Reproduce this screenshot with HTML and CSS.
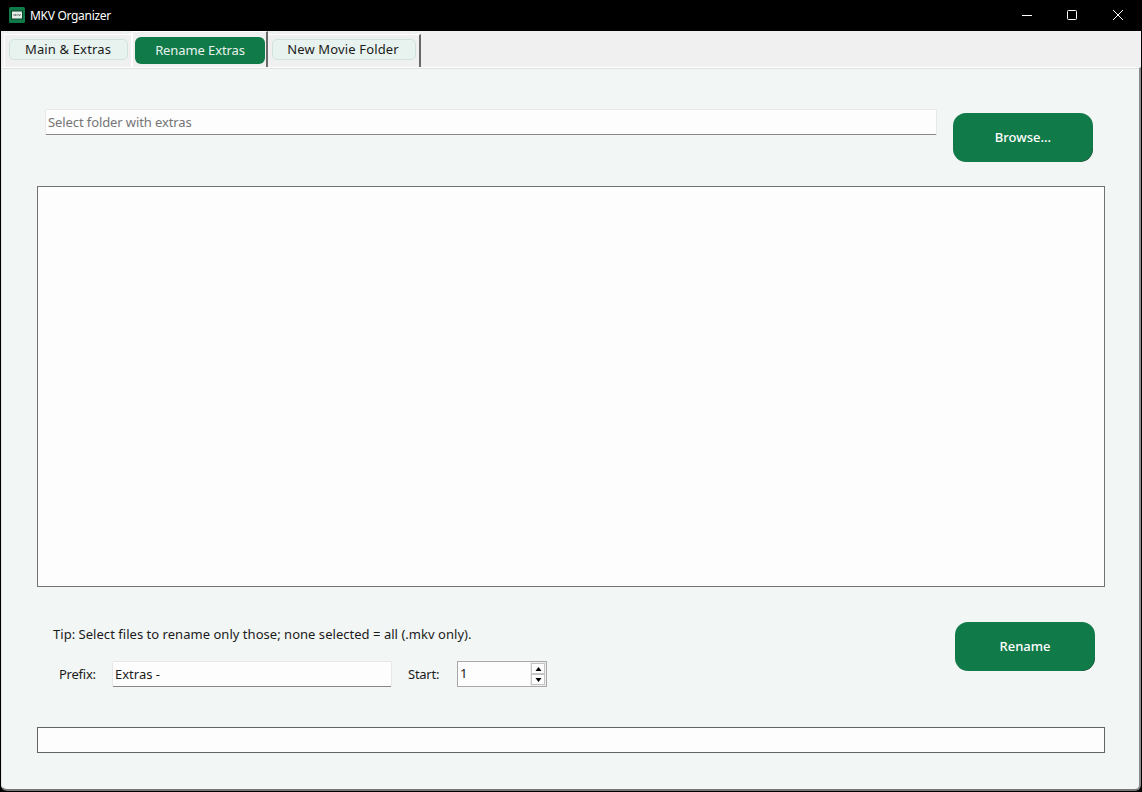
FILE: index.html
```html
<!DOCTYPE html>
<html lang="en">
<head>
<meta charset="utf-8">
<title>MKV Organizer</title>
<link rel="stylesheet" href="styles.css">
</head>
<body>
<div class="window">
  <header class="titlebar">
    <svg class="app-icon" width="16" height="16" viewBox="0 0 16 16">
      <rect width="16" height="16" rx="1.5" fill="#117a49"/>
      <rect x="2.5" y="4" width="11" height="8" fill="#e4ece8" stroke="#0a3f28"/>
      <path d="M5 7v2M6.5 7v2M8 7v2M9.5 7l1 2 1-2" fill="none" stroke="#58635e" stroke-width=".8"/>
    </svg>
    <span class="app-title">MKV Organizer</span>
    <svg class="controls" width="104" height="12" viewBox="0 0 104 12" fill="none" stroke="#fff">
      <path d="M0 6.5h10"/>
      <rect x="45.5" y="1.5" width="9" height="9" rx="1"/>
      <path d="M91 1l10 10M101 1l-10 10"/>
    </svg>
  </header>
  <nav class="tabs">
    <div class="tab first"><span class="pill t-main">Main &amp; Extras</span></div>
    <div class="tab active"><span class="pill t-rename">Rename Extras</span></div>
    <div class="tab last"><span class="pill t-new">New Movie Folder</span></div>
  </nav>
  <main class="pane">
    <section class="folder-row">
      <div class="field folder">Select folder with extras</div>
      <div class="button browse">Browse...</div>
    </section>
    <section class="list"></section>
    <section class="rename-row">
      <div class="options">
        <p class="tip">Tip: Select files to rename only those; none selected = all (.mkv only).</p>
        <div class="inputs">
          <span class="label prefix-label">Prefix:</span>
          <div class="field prefix">Extras -</div>
          <span class="label start-label">Start:</span>
          <div class="spin">
            <span class="value">1</span>
            <div class="steps">
              <span class="step"><svg width="7" height="4" viewBox="0 0 7 4"><path d="M3.5 0L6.5 4h-6z"/></svg></span>
              <span class="step"><svg width="7" height="4" viewBox="0 0 7 4"><path d="M3.5 4L.5 0h6z"/></svg></span>
            </div>
          </div>
        </div>
      </div>
      <div class="button rename">Rename</div>
    </section>
    <section class="status"></section>
  </main>
</div>
</body>
</html>
```
FILE: styles.css
```css
* { box-sizing: border-box; }
body {
  margin: 0;
  background: #000;
  font: 13px/18px "Noto Sans", "Open Sans", sans-serif;
  color: #1b1b1b;
  overflow: hidden;
}
.window {
  display: flex;
  flex-direction: column;
  width: 1142px;
  height: 792px;
  padding: 0 1px 1px;
}
.titlebar {
  display: flex;
  align-items: center;
  height: 31px;
  padding: 0 15px 1px 8px;
  color: #fff;
}
.app-title { margin-left: 5px; padding-top: 1px; font-size: 12px; letter-spacing: -0.3px; white-space: nowrap; }
.controls { margin-left: auto; }

.tabs {
  display: flex;
  align-items: flex-end;
  height: 36px;
  padding-left: 3px;
  background: #f0f0f0;
}
.tab {
  height: 33px;
  padding: 4px 3px 0 4px;
  border: 1px solid #fff;
  border-bottom: 0;
}
.tab.first { width: 128px; }
.tab.active {
  width: 136px;
  height: 36px;
  padding: 5px 0 0 2px;
  border-right: 2px solid #696969;
}
.tab.last {
  width: 153px;
  padding-left: 4px;
  border-left: 0;
  border-right: 2px solid #696969;
}
.pill {
  display: flex;
  align-items: center;
  justify-content: center;
  height: 21px;
  padding-bottom: 2px;
  border: 1px solid #cfe3db;
  border-radius: 5px;
  background: #e8f3ef;
  letter-spacing: 0.15px;
  white-space: nowrap;
}
.t-main { width: 119px; padding-right: 1px; }
.t-rename {
  width: 130px;
  height: 27px;
  border: 0;
  border-radius: 6px;
  background: #117a49;
  color: #e8f3ef;
  letter-spacing: -0.1px;
}
.t-new { width: 144px; padding-right: 2px; }

.pane {
  flex: 1;
  padding: 40px 34px 0 35px;
  background: #f2f6f5;
  border: 1px solid #fff;
  border-left-color: #e3e3e3;
  border-right: 2px solid #8a8a8a;
  border-bottom: 2px solid #777;
  border-radius: 0 0 6px 6px;
  box-shadow: inset 0 1px #e0e0e0;
}
.folder-row { display: flex; height: 78px; padding-left: 8px; }
.field {
  height: 26px;
  padding: 3px 2px;
  border: 1px solid #e8e8e8;
  border-bottom-color: #868686;
  border-radius: 2px;
  background: #fdfdfd;
  white-space: nowrap;
}
.folder { width: 892px; margin-top: 1px; color: #757575; letter-spacing: -0.1px; }
.button {
  display: flex;
  align-items: center;
  justify-content: center;
  width: 140px;
  height: 49px;
  padding-bottom: 2px;
  border-radius: 13px;
  background: #117a49;
  color: #fff;
  font-weight: 500;
}
/* the dark lower-right edge shows only around the rounded corner */
.button {
  background:
    radial-gradient(circle at 0 0, #117a49 12px, #06351f 13px) 100% 100% / 13px 13px no-repeat,
    #117a49;
}
.browse { margin: 5px 0 0 16px; }
.list {
  width: 1068px;
  height: 401px;
  border: 1px solid #727272;
  background: #fdfdfd;
}
.rename-row {
  display: flex;
  justify-content: space-between;
  height: 140px;
  padding: 35px 10px 0 16px;
}
.tip { margin: 3px 0 18px; white-space: nowrap; letter-spacing: 0.03px; }
.inputs { display: flex; align-items: center; padding-left: 6px; }
.label { letter-spacing: -0.25px; }
.prefix-label { width: 53px; }
.prefix { width: 280px; }
.start-label { width: 49px; margin-left: 16px; }
.spin {
  display: flex;
  justify-content: space-between;
  width: 90px;
  height: 26px;
  border: 1px solid #a8a8a8;
  background: #fdfdfd;
}
.value { padding: 2px; }
.steps { display: flex; flex-direction: column; width: 16px; padding: 1px; background: #eee; }
.step {
  display: flex;
  align-items: center;
  justify-content: center;
  height: 11px;
  border: 1px solid #c4c4c4;
  background: #fdfdfd;
}
.status {
  width: 1068px;
  height: 26px;
  border: 1px solid #646464;
  background: #fdfdfd;
}
```
